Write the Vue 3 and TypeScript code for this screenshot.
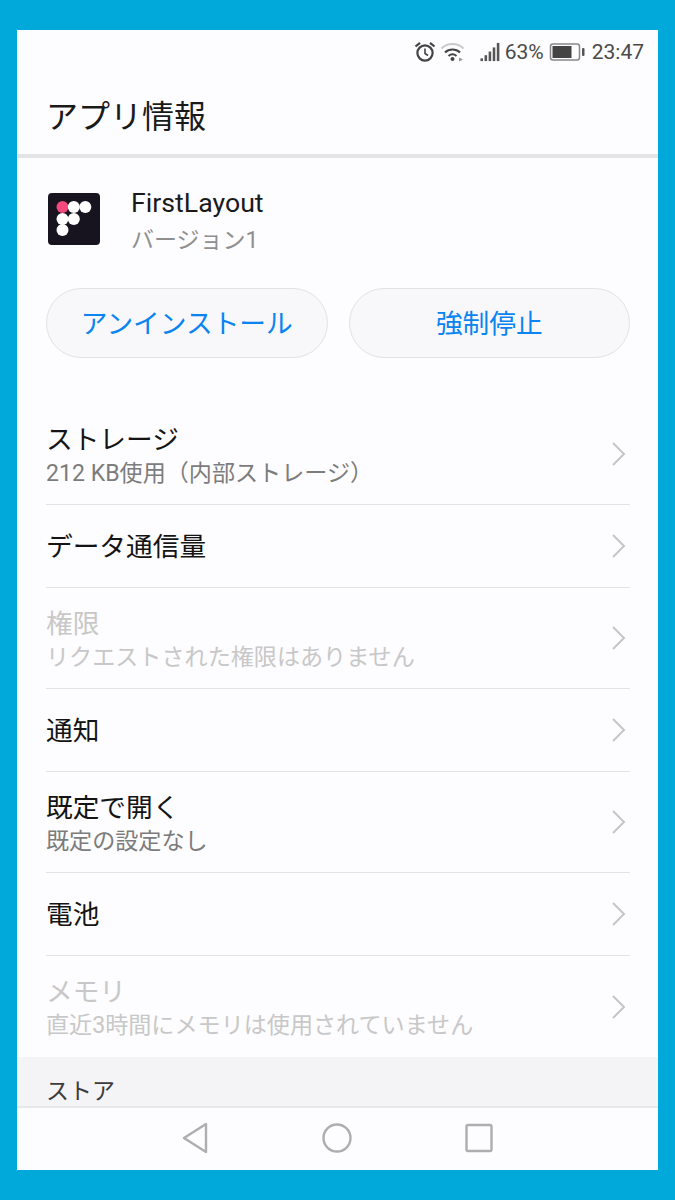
<template>
  <div class="frame">
    <div class="screen">
      <div class="status-bar">
        <svg class="ic-alarm" viewBox="0 0 22 22">
          <circle cx="11" cy="12" r="7.6" fill="none" stroke="#444" stroke-width="2.200" />
          <path d="M11 7.5V12.5L14 14.5" fill="none" stroke="#444" stroke-width="1.6" />
          <path d="M1.5 5.5L6 1.8M20.5 5.5L16 1.8" fill="none" stroke="#444" stroke-width="2.200" />
        </svg>
        <svg class="ic-wifi" viewBox="0 0 26 22">
          <path d="M1.5 7.5C7.5 1.5 17.5 1.5 23.5 7.5" fill="none" stroke="#c9c9c9" stroke-width="2" />
          <path d="M5 11.5C9 7.5 16 7.5 20 11.5" fill="none" stroke="#444" stroke-width="2" />
          <path d="M8.5 15C11 12.8 14 12.8 16.5 15" fill="none" stroke="#444" stroke-width="2" />
          <circle cx="12.5" cy="18" r="2" fill="#444" />
          <path d="M19 16.5L23 18.5L19 20.5Z" fill="#999" />
        </svg>
        <svg class="ic-signal" viewBox="0 0 22 22">
          <rect x="0.5" y="18" width="2.800" height="3" fill="#555" />
          <rect x="5" y="14.5" width="2.800" height="6.5" fill="#555" />
          <rect x="9.5" y="10.5" width="2.800" height="10.5" fill="#555" />
          <rect x="14" y="6" width="2.800" height="15" fill="#555" />
          <rect x="18.5" y="1" width="2.800" height="20" fill="#555" />
        </svg>
        <span class="pct">63%</span>
        <svg class="ic-battery" viewBox="0 0 36 18">
          <rect x="1" y="1" width="29" height="16" rx="2.5" fill="none" stroke="#888" stroke-width="1.5" />
          <rect x="3" y="3" width="19" height="12" fill="#444" />
          <rect x="32.5" y="5" width="2.5" height="8" rx="1" fill="#555" />
        </svg>
        <span class="clock">23:47</span>
      </div>

      <header class="title-bar">アプリ情報</header>

      <section class="app-head">
        <div class="app-icon">
          <svg viewBox="0 0 52 52" width="52" height="52">
            <circle cx="14.500" cy="14" r="6" fill="#f4497c" />
            <circle cx="25.800" cy="14" r="6" fill="#fff" />
            <circle cx="37.300" cy="14" r="6" fill="#fff" />
            <circle cx="14.500" cy="26" r="6" fill="#fff" />
            <circle cx="25.800" cy="26" r="6" fill="#fff" />
            <circle cx="14.500" cy="37" r="6" fill="#fff" />
          </svg>
        </div>
        <div class="app-meta">
          <div class="app-name">FirstLayout</div>
          <div class="app-version">バージョン1</div>
        </div>
      </section>

      <div class="actions">
        <button class="pill">アンインストール</button>
        <button class="pill">強制停止</button>
      </div>

      <ul class="list">
        <li
          v-for="row in rows"
          :key="row.title"
          class="row"
          :class="{ tall: row.sub, off: row.disabled }"
        >
          <div class="row-text">
            <div class="row-title">{{ row.title }}</div>
            <div v-if="row.sub" class="row-sub">{{ row.sub }}</div>
          </div>
          <svg class="chevron" viewBox="0 0 16 26">
            <path d="M2 2L13 13L2 24" fill="none" stroke="#c6c6c6" stroke-width="2" />
          </svg>
        </li>
      </ul>

      <div class="section-head">ストア</div>

      <nav class="nav-bar">
        <svg viewBox="0 0 28 32" width="28" height="32">
          <path d="M25 2V30L3 16Z" fill="none" stroke="#aeaeae" stroke-width="2.4" stroke-linejoin="round" />
        </svg>
        <svg viewBox="0 0 30 32" width="30" height="32">
          <circle cx="15" cy="16" r="13.500" fill="none" stroke="#aeaeae" stroke-width="2.4" />
        </svg>
        <svg viewBox="0 0 28 32" width="28" height="32">
          <rect x="1.500" y="3" width="25" height="26" rx="1.500" fill="none" stroke="#aeaeae" stroke-width="2.400" />
        </svg>
      </nav>
    </div>
  </div>
</template>

<script setup lang="ts">
type InfoRow = {
  title: string
  sub?: string
  disabled?: boolean
}

const rows: InfoRow[] = [
  { title: 'ストレージ', sub: '212 KB使用（内部ストレージ）' },
  { title: 'データ通信量' },
  { title: '権限', sub: 'リクエストされた権限はありません', disabled: true },
  { title: '通知' },
  { title: '既定で開く', sub: '既定の設定なし' },
  { title: '電池' },
  { title: 'メモリ', sub: '直近3時間にメモリは使用されていません', disabled: true },
]
</script>

<style>
html,
body {
  margin: 0;
  background: #00a9d9;
}
</style>

<style scoped>
.frame {
  box-sizing: border-box;
  width: 675px;
  height: 1200px;
  padding: 30px 17px;
  background: #00a9d9;
  font-family: Roboto, "Noto Sans CJK JP", sans-serif;
}

.screen {
  display: flex;
  flex-direction: column;
  width: 641px;
  height: 1140px;
  overflow: hidden;
  background: #fdfcfe;
}

.status-bar {
  display: flex;
  align-items: center;
  justify-content: flex-end;
  height: 44px;
  padding-right: 14px;
  color: #4a4a4a;
  font-size: 21px;
}

.ic-alarm {
  width: 22px;
  height: 22px;
}

.ic-wifi {
  width: 26px;
  height: 22px;
  margin-left: 4px;
}

.ic-signal {
  width: 20px;
  height: 20px;
  margin-left: 14px;
}

.pct {
  margin-left: 5px;
  margin-right: -1px;
}

.ic-battery {
  width: 37px;
  height: 18px;
  margin-left: 6px;
}

.clock {
  margin-left: 6px;
}

.title-bar {
  box-sizing: border-box;
  height: 84px;
  padding: 21px 0 0 29px;
  border-bottom: 4px solid #e4e4e6;
  color: #1a1a1a;
  font-size: 32px;
  line-height: 44px;
}

.app-head {
  display: flex;
  height: 130px;
  padding-left: 31px;
}

.app-icon {
  width: 52px;
  height: 52px;
  margin-top: 35px;
  border-radius: 4px;
  background: #17141f;
}

.app-meta {
  margin: 28px 0 0 32px;
}

.app-name {
  margin-left: -1px;
  color: #1a1a1a;
  font-size: 26.700px;
  line-height: 34px;
}

.app-version {
  margin-top: 5px;
  margin-left: -1px;
  color: #8f8f8f;
  font-size: 23px;
  line-height: 32px;
}

.actions {
  display: flex;
  gap: 21px;
  padding: 0 28px 0 29px;
}

.pill {
  flex: 1;
  height: 70px;
  padding: 0 0 4px;
  border: 1px solid #e2e2e4;
  border-radius: 36px;
  background: #f8f7f9;
  color: #0a84f0;
  font: inherit;
  font-size: 26.700px;
}

.list {
  margin: 46px 28px 0 29px;
  padding: 0;
  list-style: none;
}

.row {
  display: flex;
  align-items: center;
  justify-content: space-between;
  box-sizing: border-box;
  height: 83px;
  border-bottom: 1px solid #e3e3e5;
}

.row.tall {
  height: 101px;
}

.row:last-child {
  border-bottom: 0;
}

.row-text {
  padding-top: 2px;
}

.row-title {
  color: #141414;
  font-size: 26.700px;
  line-height: 36px;
}

.row-sub {
  margin-top: 1px;
  color: #7c7c7c;
  font-size: 23.100px;
  line-height: 30px;
}

.row.off .row-title,
.row.off .row-sub {
  color: #c8c8c8;
}

.chevron {
  width: 16px;
  height: 26px;
  margin-right: 3px;
}

.section-head {
  box-sizing: border-box;
  height: 49px;
  padding: 20px 0 0 29px;
  background: #f4f3f5;
  color: #3c3c3c;
  font-size: 23px;
  line-height: 30px;
}

.nav-bar {
  display: flex;
  align-items: center;
  justify-content: center;
  gap: 113px;
  box-sizing: border-box;
  height: 64px;
  padding: 0 1px 2px 0;
  border-top: 2px solid #e8e8ea;
  background: #fdfcfe;
}
</style>
